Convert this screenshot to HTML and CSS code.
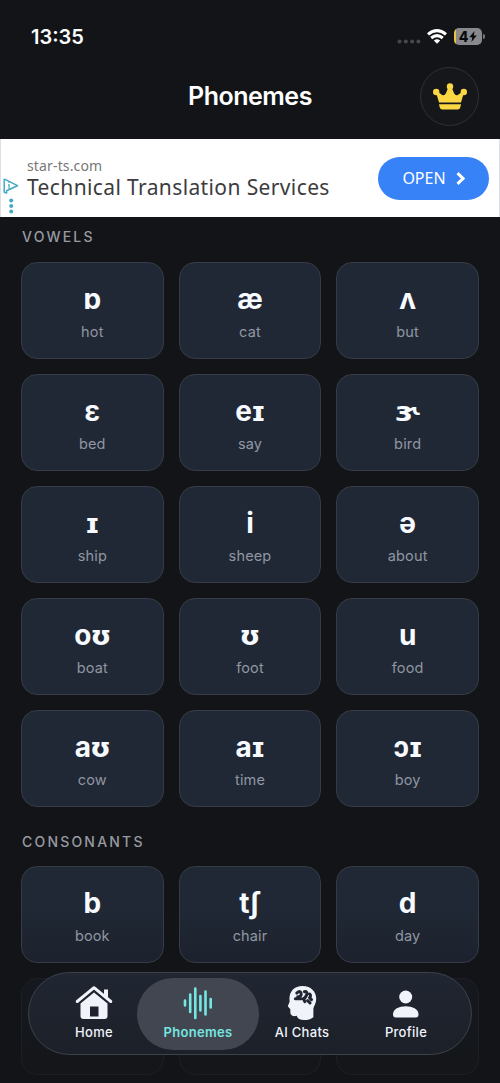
FILE: index.html
```html
<!DOCTYPE html>
<html lang="en">
<head>
<meta charset="utf-8">
<title>Phonemes</title>
<link rel="stylesheet" href="styles.css">
</head>
<body>
<div class="app">
  <div class="status">
    <span class="time">13:35</span>
    <div class="indicators">
      <svg class="cell" width="24" height="5" viewBox="0 0 24 5" fill="#47484c"><circle cx="2.5" cy="2.5" r="2"/><circle cx="8.8" cy="2.5" r="2"/><circle cx="15.1" cy="2.5" r="2"/><circle cx="21.4" cy="2.5" r="2"/></svg>
      <svg class="wifi" width="20" height="15" viewBox="0 0 20 15" fill="none" stroke="#fff" stroke-width="3"><path d="M1 5.4Q10-2.2 19 5.4M4.200 9Q10 4.200 15.800 9"/><path d="M10 14.800 6.800 11.600Q10 8.800 13.200 11.600Z" fill="#fff" stroke="none"/></svg>
      <div class="battery"><span>4</span><svg width="8" height="11" viewBox="0 0 8 11"><path d="M5.600 0 .3 6.200h3L2.400 11 7.800 4.600h-3z" fill="#090a0c"/></svg></div>
      <i class="tip"></i>
    </div>
  </div>
  <header class="header">
    <span></span>
    <h1>Phonemes</h1>
    <div class="crown"><svg width="34" height="27" viewBox="0 0 34 27" fill="#fbd843"><circle cx="17" cy="3.400" r="3.200"/><circle cx="3.200" cy="9" r="3.200"/><circle cx="30.800" cy="9" r="3.200"/><path d="M3.500 11 5 9 9.200 12Q11.500 13 12.800 10.500L15.500 4h3L21.200 10.500Q22.500 13 24.800 12L29 9 30.500 11 28 19.400H6ZM6 21.200H28L27.400 24Q26.900 26.500 24.500 26.500H9.500Q7.100 26.500 6.600 24Z"/></svg></div>
  </header>
  <section class="ad">
    <svg class="choices" width="16" height="36" viewBox="0 0 16 36"><path d="M1.200 1.500V14.200L3.600 15V12.800L14.500 7.700 2 1.300Z" fill="none" stroke="#43a9c6" stroke-width="1.500" stroke-linejoin="round"/><path d="M6 3.600V5M5 6.800H6.100V11" fill="none" stroke="#43a9c6" stroke-width="1.200"/><g fill="#43a9c6"><circle cx="8.200" cy="22.500" r="2"/><circle cx="8.200" cy="28" r="2"/><circle cx="8.200" cy="33.400" r="2"/></g></svg>
    <div class="copy"><span class="domain">star-ts.com</span><span class="headline">Technical Translation Services</span></div>
    <div class="open"><span>OPEN</span><svg width="9" height="13" viewBox="0 0 9 13"><path d="M1.500 1.200 7 6.500 1.500 11.800" fill="none" stroke="#fff" stroke-width="3"/></svg></div>
  </section>
  <main class="content">
    <h2>VOWELS</h2>
    <div class="grid">
      <div class="card"><b>ɒ</b><span>hot</span></div>
      <div class="card"><b>æ</b><span>cat</span></div>
      <div class="card"><b>ʌ</b><span>but</span></div>
      <div class="card"><b>ɛ</b><span>bed</span></div>
      <div class="card"><b>e<i>ɪ</i></b><span>say</span></div>
      <div class="card"><b><i class="wide">ɝ</i></b><span>bird</span></div>
      <div class="card"><b><i>ɪ</i></b><span>ship</span></div>
      <div class="card"><b>i</b><span>sheep</span></div>
      <div class="card"><b>ə</b><span>about</span></div>
      <div class="card"><b>o<i>ʊ</i></b><span>boat</span></div>
      <div class="card"><b><i>ʊ</i></b><span>foot</span></div>
      <div class="card"><b>u</b><span>food</span></div>
      <div class="card"><b>a<i>ʊ</i></b><span>cow</span></div>
      <div class="card"><b>a<i>ɪ</i></b><span>time</span></div>
      <div class="card"><b>ɔ<i>ɪ</i></b><span>boy</span></div>
    </div>
    <h2 class="second">CONSONANTS</h2>
    <div class="grid">
      <div class="card low"><b>b</b><span>book</span></div>
      <div class="card low"><b>tʃ</b><span>chair</span></div>
      <div class="card low"><b>d</b><span>day</span></div>
      <div class="card faded"></div>
      <div class="card faded"></div>
      <div class="card faded"></div>
    </div>
  </main>
  <nav class="tabs">
    <div class="tab"><svg width="38" height="36" viewBox="0 0 38 36"><path d="M2.200 16.500 19 2.700 35.800 16.500" fill="none" stroke="#f1f3fb" stroke-width="3" stroke-linecap="round" stroke-linejoin="round"/><path d="M29 4.500h4v10l-4-3.500zM5.500 18.500 19 7.500 32.500 18.500V31Q32.500 34 29.500 34H8.500Q5.500 34 5.500 31ZM15 21.500V31.500H23.500V21.500Z" fill="#f1f3fb" fill-rule="evenodd"/></svg><span>Home</span></div>
    <div class="tab active"><svg width="38" height="36" viewBox="0 0 38 36" stroke="#75e6e1" stroke-width="2.600" stroke-linecap="round"><path d="M6 15.500V20.500M11.200 9.500V27M16.300 3.500V33M21.400 11V25.500M26.500 6.500V29.500M31.700 14V22.500"/></svg><span>Phonemes</span></div>
    <div class="tab"><svg class="head" width="38" height="38" viewBox="0 0 38 38"><path d="M19.500 1C29 1 34 7.500 34 14.500 34 20 31 22.500 31 26V34Q27 37 21 37 14.500 37 13.500 32.500 9 34 7 30.500 6.500 28.500 6.700 25.500L4 22.500 6 17.500C4.500 8 10 1 19.500 1Z" fill="#f1f3fb"/><path d="M13.500 8.500Q17 5 18 8.500T14.500 12.500M12 14.500H18M21.500 7Q25 6.500 24 10T20.500 14.500L22 17.500M27 9.500Q29 11 27 13.500L29 15.500M25 16.500 27.500 19" fill="none" stroke="#1f2531" stroke-width="3.200" stroke-linecap="round" stroke-linejoin="round"/></svg><span>AI Chats</span></div>
    <div class="tab"><svg width="38" height="36" viewBox="0 0 38 36" fill="#f1f3fb"><circle cx="18.700" cy="12" r="6.500"/><path d="M6 29.500C6 24 12 21.300 18.700 21.300S31.500 24 31.500 29.500Q31.500 32.500 28.500 32.500H9Q6 32.500 6 29.500Z"/></svg><span>Profile</span></div>
  </nav>
</div>
</body>
</html>
```

FILE: styles.css
```css
* { box-sizing: border-box; }
body { margin: 0; background: #121418; color: #fff; font-family: Inter, "Noto Sans", sans-serif; }
.app { position: relative; width: 500px; height: 1083px; overflow: hidden; }
svg { display: block; flex: none; }
.status { display: flex; justify-content: space-between; height: 66px; padding: 25px 15px 0 31px; }
.time { font-size: 20px; line-height: 25px; font-weight: 600; }
.indicators { display: flex; height: 25px; align-items: center; margin-top: -1px; }
.cell { margin: 9px 6px 0 0; }
.wifi { margin-right: 7px; }
.battery { display: flex; align-items: center; justify-content: center; gap: 1px; width: 28px; height: 17px; border-radius: 5px; background: linear-gradient(90deg, #efc340 2px, #88898c 2px); color: #090a0c; font-size: 14px; font-weight: 800; }
.tip { width: 2px; height: 5px; margin-left: 1px; border-radius: 0 2px 2px 0; background: #77787b; }
.header { display: grid; grid-template-columns: 59px 1fr 59px; align-items: center; height: 73px; padding: 0 21px 12px; }
.header h1 { margin: -2px 0 0; text-align: center; font-size: 25px; font-weight: 600; line-height: 30px; letter-spacing: -.5px; }
.crown { display: flex; align-items: center; justify-content: center; width: 59px; height: 59px; border: 1px solid #303135; border-radius: 50%; background: #15171a; }
.ad { display: flex; height: 78px; background: #fff; border-left: 1px solid #dcdfe4; border-right: 1px solid #dcdfe4; padding-right: 10px; font-family: "Noto Sans", sans-serif; }
.choices { margin: 39px 0 0 2px; }
.copy { display: flex; flex-direction: column; flex: 1; min-width: 0; margin: 18px 0 0 8px; white-space: nowrap; }
.domain { font-size: 14px; line-height: 18px; letter-spacing: .15px; color: #777; }
.headline { font-size: 21px; line-height: 25px; letter-spacing: .38px; color: #3c3c3e; }
.open { display: flex; align-items: center; justify-content: center; gap: 10px; width: 111px; height: 43px; margin-top: 18px; padding-bottom: 1px; border-radius: 22px; background: #3682f6; font-size: 16px; }
.content { padding: 12px 21px 0; }
h2 { margin: 0 0 16px 1px; font-size: 14px; line-height: 16.500px; font-weight: 500; letter-spacing: 2.200px; color: #989aa1; }
h2.second { margin-top: 27px; }
.grid { display: grid; grid-template-columns: repeat(3, 1fr); gap: 15px; }
.card { display: flex; flex-direction: column; align-items: center; height: 97px; padding-top: 18px; border: 1px solid #363b46; border-radius: 16px; background: #202835; }
.card b { height: 36px; font-size: 28px; line-height: 36px; font-weight: 700; color: #f7faff; }
.card i { display: inline-block; margin: 0 -1px; font-family: "DejaVu Sans", sans-serif; font-style: normal; font-size: 27px; }
.card i.wide { transform: scaleX(1.2); }
.card span { margin-top: 5px; font-size: 14.500px; line-height: 20px; letter-spacing: .15px; color: #9096a2; }
.card.low { background: linear-gradient(#202835 45%, #1c222d); }
.card.faded { background: linear-gradient(#15191f, #141619); border-color: #1c1f25; }
.tabs { position: absolute; left: 28px; top: 972px; display: flex; width: 444px; height: 83px; padding: 5px; border: 1px solid #3c414a; border-radius: 42px; background: linear-gradient(#202632, #1c2028); }
.tab { display: flex; flex-direction: column; align-items: center; width: 104px; height: 72px; padding-top: 7px; }
.tab:first-child { margin-left: 8px; }
.tab svg { height: 36px; }
.tab svg.head { margin-right: 1px; }
.tab span { margin-top: 2px; font-size: 13px; line-height: 18px; font-weight: 500; letter-spacing: .3px; color: #f1f3fb; }
.tab.active { width: 122px; margin: 0 -9px; border-radius: 36px; background: #424650; }
.tab.active span { font-weight: 600; color: #75e6e1; }
```
